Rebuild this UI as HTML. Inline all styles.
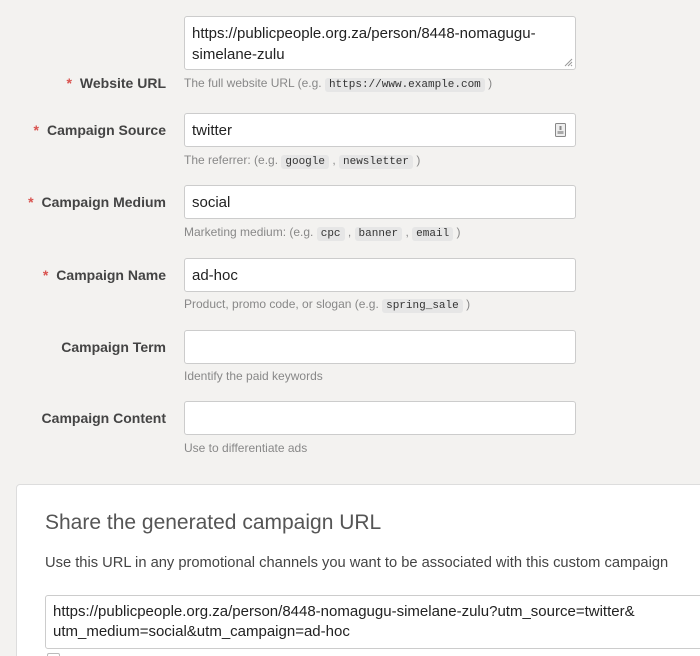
<!DOCTYPE html>
<html><head><meta charset="utf-8"><style>
*{box-sizing:border-box;margin:0;padding:0}
html,body{width:700px;height:656px;overflow:hidden}
body{background:#f3f2f0;font-family:"Liberation Sans",sans-serif;color:#333;position:relative}
.lab{position:absolute;right:534px;font-size:14px;font-weight:bold;color:#444;white-space:nowrap}
.lab b{color:#d9534f;margin-right:8px}
.inp{position:absolute;left:184px;width:392px;height:34px;background:#fff;border:1px solid #ccc;border-radius:3px;font-size:15px;padding:8px 7px;line-height:17px;color:#222}
.help{position:absolute;left:184px;font-size:12px;color:#888;white-space:nowrap}
code{font-family:"Liberation Mono",monospace;font-size:11px;background:#e6e6e6;color:#333;padding:1px 4px;border-radius:3px}
.panel{position:absolute;left:16px;top:484px;width:700px;height:200px;background:#fff;border:1px solid #ddd;border-radius:4px}
</style></head><body>
<div class="inp" style="top:16px;height:54px;padding:6px 7px;line-height:21px">https://publicpeople.org.za/person/8448-nomagugu-<br>simelane-zulu
<svg style="position:absolute;right:2px;bottom:2px" width="9" height="9"><path d="M8 1L1 8M8 4L4 8M8 7L7 8" stroke="#999" stroke-width="1"/></svg></div>
<div class="lab" style="top:75px"><b>*</b>Website URL</div>
<div class="help" style="top:76px">The full website URL (e.g. <code>https://www.example.com</code> )</div>

<div class="inp" style="top:113px">twitter<svg style="position:absolute;right:9px;top:9px" width="11" height="14"><rect x="0.5" y="0.5" width="10" height="13" rx="1" fill="#eee" stroke="#888"/><rect x="4.5" y="3" width="2" height="4" fill="#888"/><rect x="2.5" y="8" width="6" height="3" fill="#aaa"/></svg></div>
<div class="lab" style="top:122px"><b>*</b>Campaign Source</div>
<div class="help" style="top:153px">The referrer: (e.g. <code>google</code> , <code>newsletter</code> )</div>

<div class="inp" style="top:185px">social</div>
<div class="lab" style="top:194px"><b>*</b>Campaign Medium</div>
<div class="help" style="top:225px">Marketing medium: (e.g. <code>cpc</code> , <code>banner</code> , <code>email</code> )</div>

<div class="inp" style="top:258px">ad-hoc</div>
<div class="lab" style="top:267px"><b>*</b>Campaign Name</div>
<div class="help" style="top:297px">Product, promo code, or slogan (e.g. <code>spring_sale</code> )</div>

<div class="inp" style="top:330px"></div>
<div class="lab" style="top:339px">Campaign Term</div>
<div class="help" style="top:369px">Identify the paid keywords</div>

<div class="inp" style="top:401px"></div>
<div class="lab" style="top:410px">Campaign Content</div>
<div class="help" style="top:441px">Use to differentiate ads</div>

<div class="panel">
<div style="position:absolute;left:28px;top:26px;font-size:21px;color:#555;font-weight:300">Share the generated campaign URL</div>
<div style="position:absolute;left:28px;top:70px;font-size:14.7px;color:#444;white-space:nowrap">Use this URL in any promotional channels you want to be associated with this custom campaign</div>
<div style="position:absolute;left:28px;top:110px;width:680px;height:54px;border:1px solid #ccc;border-radius:3px;padding:6px 7px;font-size:15px;line-height:20px;color:#222;white-space:nowrap">https://publicpeople.org.za/person/8448-nomagugu-simelane-zulu?utm_source=twitter&amp;<br>utm_medium=social&amp;utm_campaign=ad-hoc</div>
<div style="position:absolute;left:30px;top:168px;width:13px;height:13px;border:1px solid #bbb;border-radius:2px"></div>
</div>
</body></html>
